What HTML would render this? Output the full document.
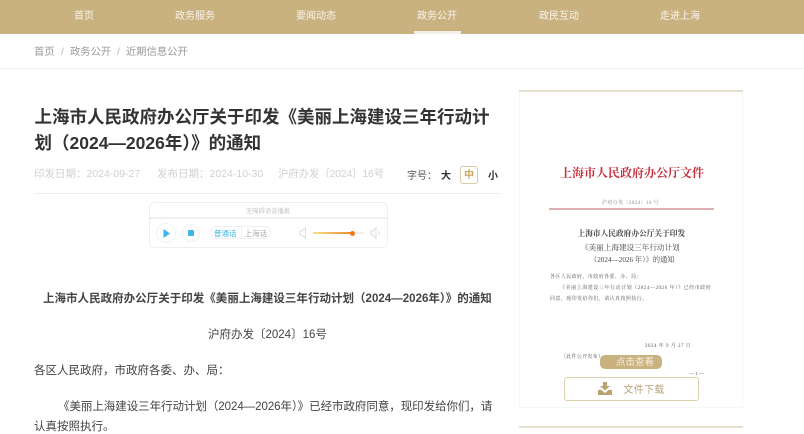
<!DOCTYPE html>
<html lang="zh"><head><meta charset="utf-8"><title>上海市人民政府办公厅</title>
<style>
*{margin:0;padding:0;box-sizing:border-box}
html,body{width:804px;height:434px;overflow:hidden;background:#fff}
body{position:relative;font-family:"Liberation Sans","Noto Sans CJK SC",sans-serif}
.a,.t{position:absolute}
.t{white-space:nowrap;line-height:1;font-family:"Liberation Sans","Noto Sans CJK SC",sans-serif;filter:blur(.3px)}
.nav{color:#f9f5ec;font-size:10px;top:12px;width:60px;text-align:center}
.crumb{color:#999;font-size:10.3px;top:48px}
.meta{color:#d0d0d0;font-size:10.5px;top:169px}
.body{color:#444;font-size:11.5px}
.doc{font-family:"Liberation Serif","Noto Serif CJK SC",serif;color:#444}
.sm{font-size:5px;color:#555}
</style></head><body>
<div class="a" style="left:0;top:0;width:804px;height:34px;background:#c9b280"></div>
<div class="t nav" style="left:54px">首页</div>
<div class="t nav" style="left:165px">政务服务</div>
<div class="t nav" style="left:286px">要闻动态</div>
<div class="t nav" style="left:407px">政务公开</div>
<div class="t nav" style="left:529px">政民互动</div>
<div class="t nav" style="left:650px">走进上海</div>
<div class="a" style="left:414px;top:31px;width:47px;height:3px;background:#f2f0e8"></div>

<div class="t crumb" style="left:34px">首页</div>
<div class="t crumb" style="left:61px;color:#bbb">/</div>
<div class="t crumb" style="left:70px">政务公开</div>
<div class="t crumb" style="left:117px;color:#bbb">/</div>
<div class="t crumb" style="left:126px">近期信息公开</div>
<div class="a" style="left:0;top:68px;width:804px;height:1px;background:#f0f0f0"></div>

<div class="t" style="left:34.500px;top:109px;font-size:17.5px;font-weight:700;color:#333">上海市人民政府办公厅关于印发《美丽上海建设三年行动计</div>
<div class="t" style="left:34.500px;top:135px;font-size:17.5px;font-weight:700;color:#333">划（2024—2026年）》的通知</div>

<div class="t meta" style="left:34px">印发日期：2024-09-27</div>
<div class="t meta" style="left:157px">发布日期：2024-10-30</div>
<div class="t meta" style="left:278px;letter-spacing:-.2px">沪府办发〔2024〕16号</div>
<div class="t" style="left:407px;top:172px;font-size:10px;color:#555">字号：</div>
<div class="t" style="left:441px;top:172px;font-size:10px;font-weight:700;color:#333">大</div>
<div class="a" style="left:460px;top:166px;width:18px;height:18px;border:1px solid #d8cba8;border-radius:3px"></div>
<div class="t" style="left:464px;top:171px;font-size:10px;font-weight:700;color:#c9a861">中</div>
<div class="t" style="left:488px;top:172px;font-size:10px;font-weight:700;color:#333">小</div>
<div class="a" style="left:34px;top:193px;width:467px;height:1px;background:#f0f0f0"></div>

<!-- audio player -->
<div class="a" style="left:149px;top:202px;width:239px;height:46px;border:1px solid #eee;border-radius:6px;background:#fff"></div>
<div class="a" style="left:150px;top:217px;width:237px;height:2px;background:#f0f0f0"></div>
<div class="t" style="left:246px;top:209px;font-size:6.3px;color:#c8c8c8">无障碍语音播报</div>
<div class="a" style="left:156px;top:223px;width:20px;height:20px;border:1px solid #eef0f2;border-radius:50%"></div>
<svg class="a" style="left:163px;top:229px" width="8" height="9"><path d="M0.500 0 L7 4.500 L0.500 9Z" fill="#3db4ea"/></svg>
<div class="a" style="left:182px;top:224px;width:18px;height:18px;border:1px solid #eef0f2;border-radius:50%"></div>
<div class="a" style="left:188px;top:230px;width:6px;height:6px;background:#3db4ea;border-radius:1px"></div>
<div class="a" style="left:210px;top:226px;width:61px;height:13px;border:1px solid #eef0f2;border-radius:7px"></div>
<div class="a" style="left:241px;top:227px;width:1px;height:11px;background:#eef0f2"></div>
<div class="t" style="left:214px;top:230px;font-size:7.5px;color:#3db4ea">普通话</div>
<div class="t" style="left:244.500px;top:230px;font-size:7.5px;color:#aaa">上海话</div>
<svg class="a" style="left:299px;top:227px" width="8" height="12"><path d="M6.500 1 V11 L3 8 H1 V4 H3Z" fill="none" stroke="#ddd" stroke-width="1"/></svg>
<div class="a" style="left:313px;top:232px;width:51px;height:2px;background:#eee"></div>
<div class="a" style="left:313px;top:232px;width:39px;height:2px;background:linear-gradient(90deg,#f7e08d,#ec8a24)"></div>
<div class="a" style="left:350px;top:230.500px;width:5px;height:5px;background:#ee7a1c;border-radius:50%"></div>
<svg class="a" style="left:370px;top:227px" width="11" height="12"><path d="M6 1 V11 L3 8 H1 V4 H3Z M8.500 4 Q10 6 8.500 8" fill="none" stroke="#ddd" stroke-width="1"/></svg>

<!-- article -->
<div class="t" style="left:43px;top:294px;font-size:11.5px;font-weight:700;color:#444;letter-spacing:.02px">上海市人民政府办公厅关于印发《美丽上海建设三年行动计划（2024—2026年）》的通知</div>
<div class="t body" style="left:208px;top:330px">沪府办发〔2024〕16号</div>
<div class="t body" style="left:34px;top:366px">各区人民政府，市政府各委、办、局：</div>
<div class="t body" style="left:58px;top:402px;letter-spacing:-.05px">《美丽上海建设三年行动计划（2024—2026年）》已经市政府同意，现印发给你们，请</div>
<div class="t body" style="left:34px;top:422px">认真按照执行。</div>

<!-- side -->
<div class="a" style="left:519px;top:90px;width:224px;height:318px;border:1px solid #f6f6f6;border-top:0;background:#fff"></div>
<div class="a" style="left:519px;top:90px;width:224px;height:2px;background:#e6dfcf"></div>
<div class="t doc" style="left:560px;top:167px;font-size:12px;font-weight:700;color:#c9303c">上海市人民政府办公厅文件</div>
<div class="t doc sm" style="left:602px;top:201px;letter-spacing:.4px;color:#888">沪府办发〔2024〕16 号</div>
<div class="a" style="left:549px;top:208px;width:165px;height:1.500px;background:#deaeb2"></div>
<div class="t doc" style="left:577.500px;top:230px;font-size:7.7px;font-weight:700">上海市人民政府办公厅关于印发</div>
<div class="t doc" style="left:581px;top:244px;font-size:7.6px">《美丽上海建设三年行动计划</div>
<div class="t doc" style="left:590px;top:257px;font-size:7.2px">（2024—2026 年）》的通知</div>
<div class="t doc sm" style="left:550px;top:274.500px;letter-spacing:.4px">各区人民政府，市政府各委、办、局：</div>
<div class="t doc sm" style="left:560px;top:285.500px;letter-spacing:.55px">《美丽上海建设三年行动计划（2024—2026 年）》已经市政府</div>
<div class="t doc sm" style="left:550px;top:296.500px;letter-spacing:.42px">同意，现印发给你们，请认真按照执行。</div>
<div class="t doc sm" style="left:645px;top:343.500px;letter-spacing:.5px">2024 年 9 月 27 日</div>
<div class="t doc sm" style="left:561px;top:354.500px;letter-spacing:.3px">（此件公开发布）</div>
<div class="t doc sm" style="left:689px;top:372px">— 1 —</div>
<div class="a" style="left:600px;top:355px;width:62px;height:14px;border-radius:5px;background:#c9b280"></div>
<div class="t" style="left:616px;top:358px;font-size:9.5px;color:#f4eedf">点击查看</div>
<div class="a" style="left:564px;top:377px;width:135px;height:24px;border:1px solid #ddd0ad;border-radius:3px;background:#fff"></div>
<svg class="a" style="left:598px;top:382px" width="14" height="13"><path d="M5 0H9V4H12L7 8.500 2 4H5Z M0 8H3.500L7 11 10.500 8H14V13H0Z" fill="#b9a26f"/></svg>
<div class="t" style="left:623.500px;top:385.500px;font-size:10px;color:#b5a27a;letter-spacing:.3px">文件下载</div>

<div class="a" style="left:519px;top:426px;width:224px;height:2px;background:#e6dfcf"></div>
</body></html>
